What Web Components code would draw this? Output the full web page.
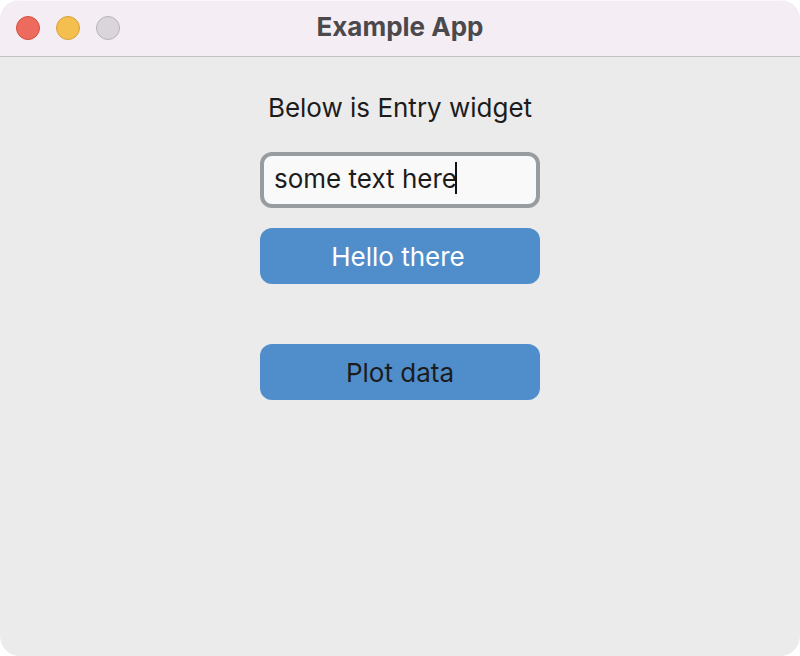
<!DOCTYPE html>
<html lang="en">
<head>
<meta charset="utf-8">
<meta name="viewport" content="width=device-width, initial-scale=1">
<title>Example App</title>
<style>
  body { margin: 0; background: #fff; color: #1c1c1c; font: 26px/32px Inter, "Liberation Sans", sans-serif; }
</style>
</head>
<body>
<app-window heading="Example App">
  <text-entry label="Below is Entry widget" value="some text here"></text-entry>
  <action-button tone="light">Hello there</action-button>
  <action-button class="plot">Plot data</action-button>
</app-window>

<script>
class AppWindow extends HTMLElement {
  constructor() {
    super();
    this.attachShadow({ mode: "open" }).innerHTML = `
      <style>
        :host { display: flex; flex-direction: column; min-height: 100vh; box-sizing: border-box;
          background: #ebebeb; border-radius: 20px; overflow: hidden; }
        header { display: grid; grid-template-columns: 1fr auto 1fr; align-items: center;
          height: 56px; padding: 0 16px; background: #f4edf4; border-bottom: 1px solid #c5c0c5;
          box-shadow: inset 0 1px #faf7fa; }
        nav { display: flex; gap: 16px; }
        nav button { width: 24px; height: 24px; padding: 0; border: 1px solid; border-radius: 50%; }
        .close { background: #ed6a5e; border-color: #d6503f; }
        .minimize { background: #f5bf4f; border-color: #d6a13d; }
        .zoom { background: #dad5db; border-color: #b8b3ba; }
        h1 { margin: 0; padding-bottom: 2px; font-size: 26px; line-height: 32px; font-weight: 700; color: #4b494c; }
        main { display: flex; flex-direction: column; align-items: center; gap: 20px; padding: 35px 16px 40px; }
        ::slotted(.plot) { margin-top: 40px; }
      </style>
      <header>
        <nav aria-label="Window controls">
          <button class="close" type="button" aria-label="Close"></button>
          <button class="minimize" type="button" aria-label="Minimize"></button>
          <button class="zoom" type="button" aria-label="Zoom" disabled></button>
        </nav>
        <h1></h1>
      </header>
      <main><slot></slot></main>`;
    this.shadowRoot.querySelector("h1").textContent = this.getAttribute("heading");
  }
}

class TextEntry extends HTMLElement {
  constructor() {
    super();
    this.attachShadow({ mode: "open" }).innerHTML = `
      <style>
        :host { display: flex; flex-direction: column; align-items: center; gap: 28px; width: 280px; max-width: 100%; }
        label { white-space: nowrap; }
        .field { display: flex; align-items: center; box-sizing: border-box; width: 100%; height: 56px;
          padding: 0 10px 4px; border: 4px solid #979ca1; border-radius: 12px; background: #f9f9f9; }
        input { field-sizing: content; min-width: 0; padding: 2px 0 0; border: 0; outline: 0; background: none;
          font: inherit; color: inherit; caret-color: transparent; }
        .caret { flex: none; width: 2px; height: 32px; margin-left: -2px; background: #111; }
      </style>
      <label for="entry"></label>
      <div class="field"><input id="entry" type="text"><span class="caret" aria-hidden="true"></span></div>`;
    this.shadowRoot.querySelector("label").textContent = this.getAttribute("label");
    this.shadowRoot.querySelector("input").value = this.getAttribute("value");
  }
}

class ActionButton extends HTMLElement {
  constructor() {
    super();
    this.attachShadow({ mode: "open" }).innerHTML = `
      <style>
        :host { display: block; width: 280px; max-width: 100%; }
        button { width: 100%; height: 56px; padding: 2px 12px 0; border: 0; border-radius: 12px;
          background: #508ecb; font: inherit; color: inherit; cursor: pointer; }
        :host([tone="light"]) button { color: #fff; padding-right: 16px; }
      </style>
      <button type="button"><slot></slot></button>`;
  }
}

customElements.define("app-window", AppWindow);
customElements.define("text-entry", TextEntry);
customElements.define("action-button", ActionButton);
</script>
</body>
</html>
